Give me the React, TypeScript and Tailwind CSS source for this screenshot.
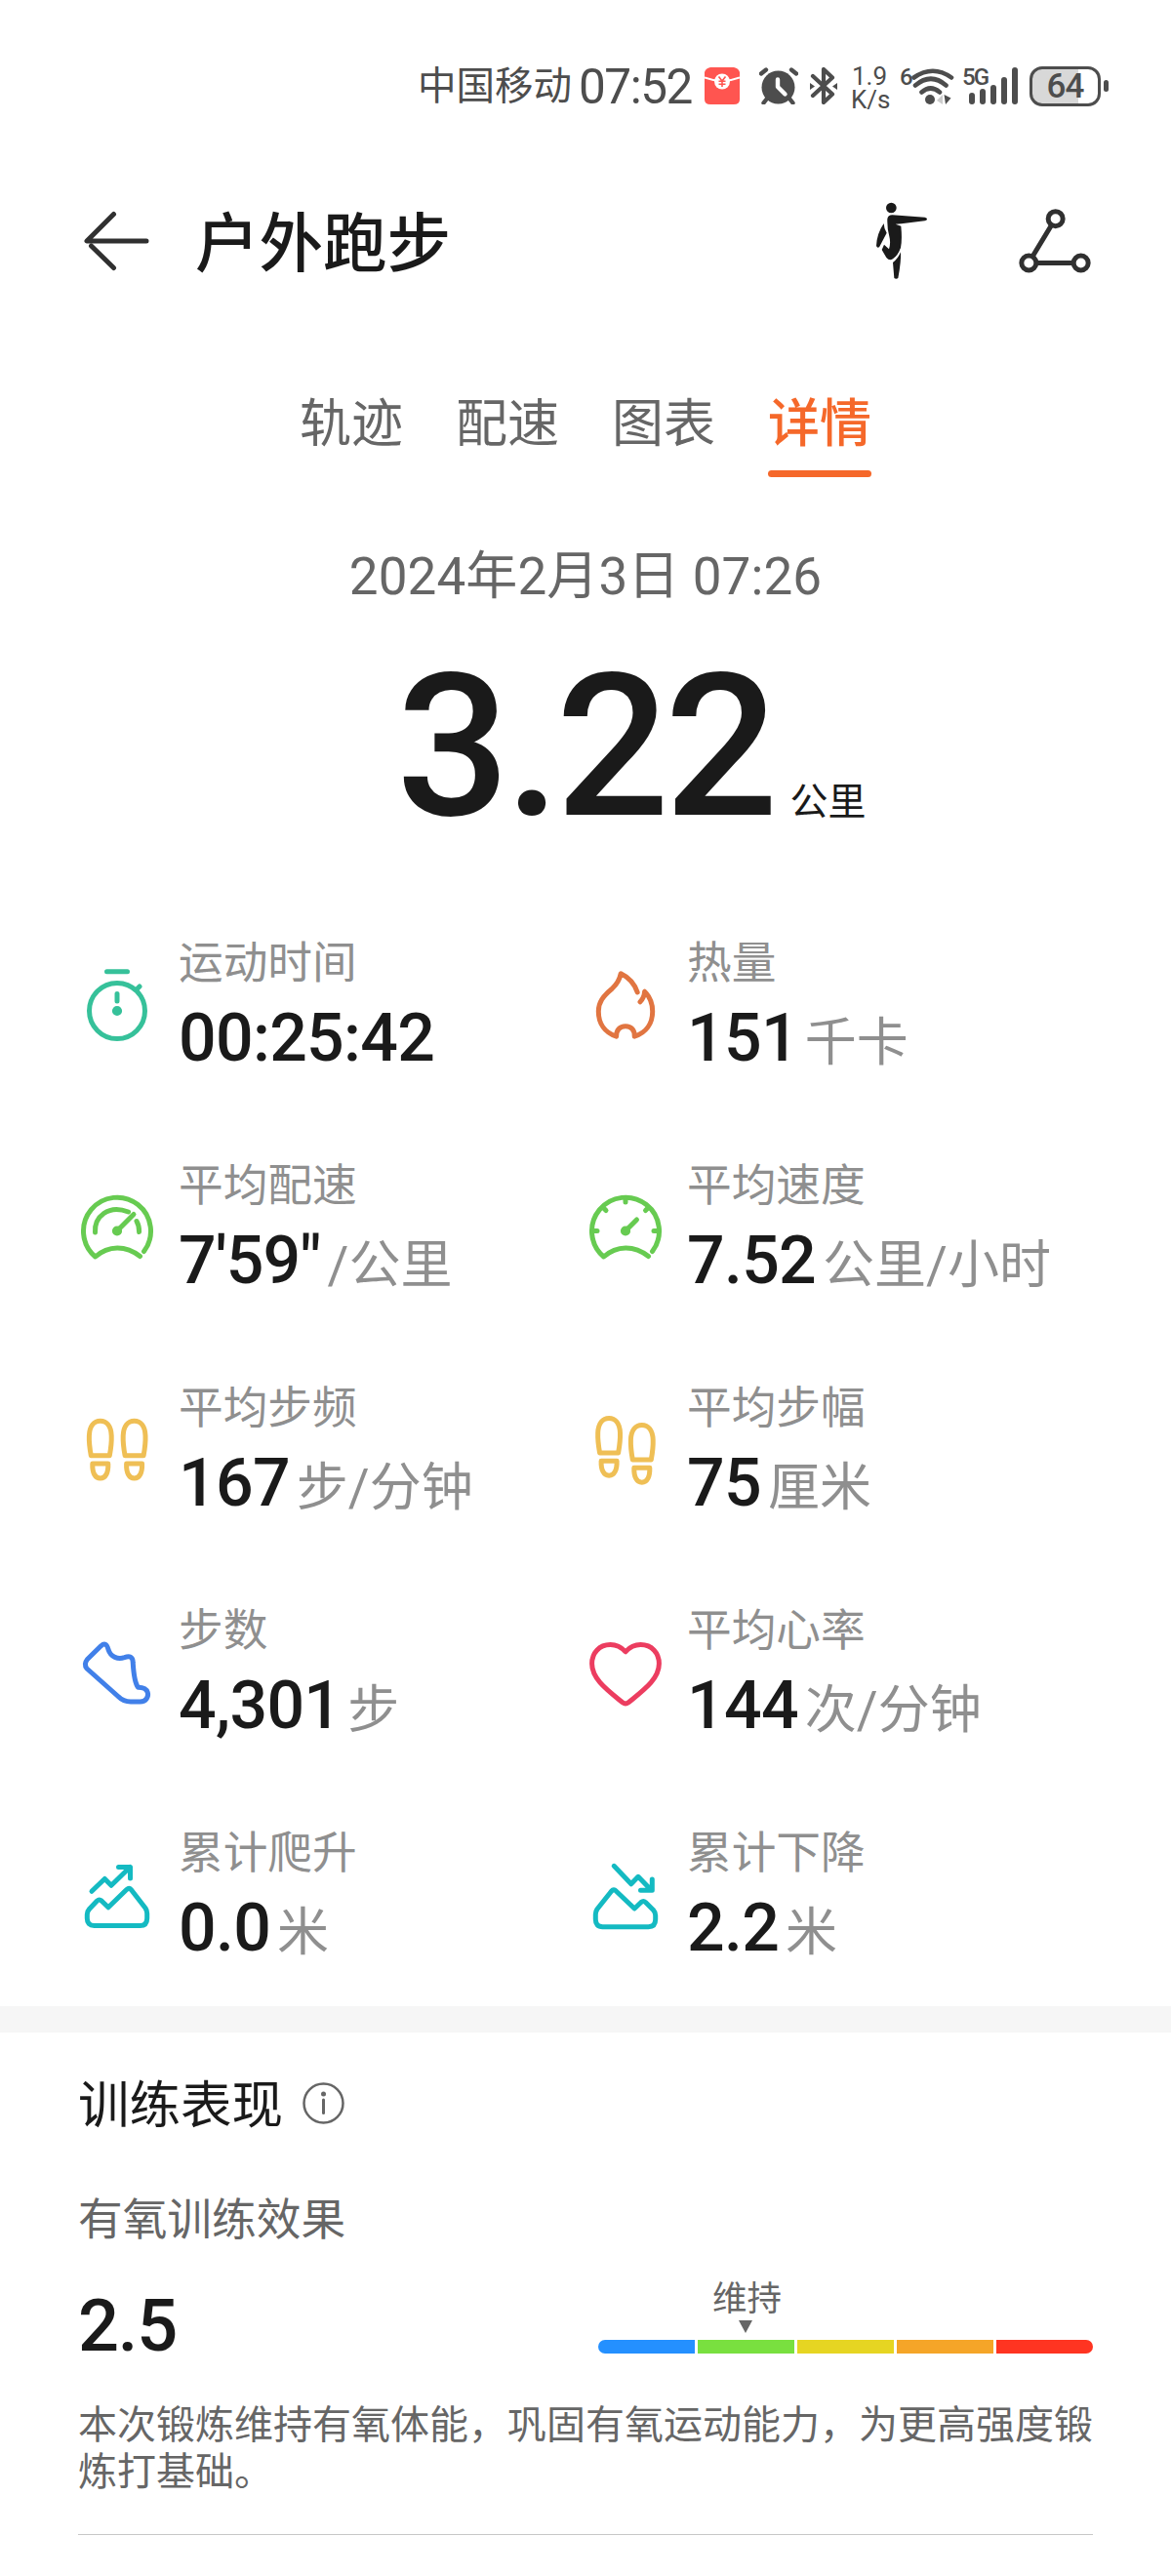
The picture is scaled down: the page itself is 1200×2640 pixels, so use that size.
import type { ReactNode } from "react";

type Stat = {
  label: string;
  value: string;
  unit?: string;
  color: string;
  icon: ReactNode;
};

const TABS = ["轨迹", "配速", "图表", "详情"];

const SEGMENTS = [
  "bg-[#2490ff] rounded-l-full",
  "bg-[#79e03f]",
  "bg-[#e6d522]",
  "bg-[#f5a528]",
  "bg-[#ff3421] rounded-r-full",
];

function Footprint({ x, y }: { x: number; y: number }) {
  return (
    <g transform={`translate(${x} ${y})`}>
      <path d="M-9.5 35.5 C-10.5 30 -11.7 22 -11.4 15 C-11 5 -6.5 0 0 0 C6.5 0 11 5 11.4 15 C11.7 22 10.5 30 9.5 35.5 Z" />
      <path d="M-8 43.8 H8 C8.3 53 5.5 58.7 0 58.7 C-5.5 58.7 -8.3 53 -8 43.8 Z" />
    </g>
  );
}

const GAUGE = "M67.5 64.5 A34.5 34.5 0 1 0 17.7 70 C31 58 49 58 63.5 69.5";

const STATS: Stat[] = [
  {
    label: "运动时间",
    value: "00:25:42",
    color: "text-[#36c19a]",
    icon: (
      <>
        <circle cx="40" cy="46" r="28.5" />
        <path d="M29.5 5.7 H50.5 M60.5 23.5 L63 21 M40 28.5 V36" />
        <circle cx="40" cy="46" r="2.6" />
      </>
    ),
  },
  {
    label: "热量",
    value: "151",
    unit: "千卡",
    color: "text-[#e17541]",
    icon: (
      <path d="M52.2 27 C49.5 19 43 11.5 35.2 7.8 C34 14 31.5 18.5 26 23.5 C17 31 12.3 37 12.3 46.5 C12.3 59 19 68.5 30.6 72.2 C30.6 65.5 34 61.8 40 61.8 C46 61.8 49.4 65.5 49.2 72.2 C61 68.5 67.7 59 67.7 46.5 C67.7 38.5 65 31.5 59.6 26.2 C59.3 30.5 57.8 34 55 36.8" />
    ),
  },
  {
    label: "平均配速",
    value: "7'59\"",
    unit: "/公里",
    color: "text-[#67cb51]",
    icon: (
      <>
        <path d={GAUGE} />
        <path d="M17.5 45 C16.5 29 31 16 51.5 24 M60 33.5 C62 37 62.7 40.5 62.6 44.5" />
        <path d="M40 43.5 L57 26.5" />
        <circle cx="40" cy="43.5" r="2.6" />
      </>
    ),
  },
  {
    label: "平均速度",
    value: "7.52",
    unit: "公里/小时",
    color: "text-[#67cb51]",
    icon: (
      <>
        <path d={GAUGE} />
        <path d="M40 10 V14 M6 43.5 H11 M74 43.5 H69 M17 19.5 L20 22.5 M63.5 19.5 L60.5 22.5 M40 43.5 L51.5 32" />
        <circle cx="40" cy="43.5" r="2.6" />
      </>
    ),
  },
  {
    label: "平均步频",
    value: "167",
    unit: "步/分钟",
    color: "text-[#efbf55]",
    icon: (
      <>
        <Footprint x={22.8} y={10.3} />
        <Footprint x={57.6} y={10.3} />
      </>
    ),
  },
  {
    label: "平均步幅",
    value: "75",
    unit: "厘米",
    color: "text-[#efbf55]",
    icon: (
      <>
        <Footprint x={23.1} y={7.5} />
        <Footprint x={56.8} y={14.5} />
      </>
    ),
  },
  {
    label: "步数",
    value: "4,301",
    unit: "步",
    color: "text-[#4180e9]",
    icon: (
      <path d="M23.5 12.8 L9.5 26.5 Q5.5 31.5 9 36 L41 64.5 Q46.5 70 54 70 H63.5 C70 70 72.5 64.5 71.3 60.5 C70 56.5 67 55.3 61.5 55.3 C57.5 50 56.7 38 56.2 29.5 C56 24 53 22.8 47.5 24.7 C41 26.7 33.5 24.5 31 16.5 C29.5 10.5 27 9.7 23.5 12.8 Z" />
    ),
  },
  {
    label: "平均心率",
    value: "144",
    unit: "次/分钟",
    color: "text-[#ec3d60]",
    icon: (
      <path d="M40 18.8 C35 13.5 30 11.6 24.5 11.6 C13 11.6 5.6 20 5.6 31 C5.6 47 22 58.5 37 70.8 Q40 73 43 70.8 C58 58.5 74.4 47 74.4 31 C74.4 20 67 11.6 55.5 11.6 C50 11.6 45 13.5 40 18.8 Z" />
    ),
  },
  {
    label: "累计爬升",
    value: "0.0",
    unit: "米",
    color: "text-[#14bac2]",
    icon: (
      <>
        <path d="M14 36.3 L27.3 23.5 L34 30.3 L53.3 11.5 M41.5 11.5 H53.5 V23" />
        <path d="M9.3 60 Q9.3 57 11.5 54.5 L19.5 46 Q21.7 44 24 46 L31 52.8 L50 34.3 Q52.3 32.3 54.5 34.7 L69 53.5 Q70.7 56 70.7 59 V64 Q70.7 71.5 63.5 71.5 H16.5 Q9.3 71.5 9.3 64 Z" />
      </>
    ),
  },
  {
    label: "累计下降",
    value: "2.2",
    unit: "米",
    color: "text-[#14bac2]",
    icon: (
      <>
        <path d="M28.2 10.3 L45.8 28.8 L53 21.3 L66.5 35.2 M67.3 24 V35.3 H55.5" />
        <path d="M9.3 60 Q9.3 57 11 54.5 L25.5 36.2 Q28 33.5 30.3 36 L49.2 54 L56 47.5 Q58.3 45.5 60.5 47.5 L68.5 55.5 Q70.7 58 70.7 61 V65 Q70.7 72.7 63.5 72.7 H16.5 Q9.3 72.7 9.3 65 Z" />
      </>
    ),
  },
];

function StatusBar() {
  return (
    <div className="flex h-[176px] items-center pl-[428px] text-[#4d4d4d]">
      <span className="w-[165px] pt-px text-[39.5px] leading-[46px] whitespace-nowrap">
        中国移动
      </span>
      <span className="w-[129px] pt-[2px] text-[49.5px] leading-[50px] tracking-[-1.5px] whitespace-nowrap">
        07:52
      </span>

      <svg className="h-[38px] w-[36px]" viewBox="0 0 36 38">
        <path
          d="M0 5 Q1 1 6 0 H30 Q35 1 36 5 V33 Q36 38 30 38 H6 Q0 38 0 33 Z"
          fill="#ff5550"
        />
        <path d="M0 10.5 Q9 14 18 14 Q27 14 36 10.5" stroke="#fff" strokeWidth="2" fill="none" />
        <circle cx="18" cy="14.5" r="8" fill="#fff" />
        <path
          d="M14.5 9.5 L18 14 L21.5 9.5 M18 14 V20 M14.5 14.3 H21.5 M14.5 17.2 H21.5"
          stroke="#ff5550"
          strokeWidth="1.6"
          fill="none"
        />
      </svg>

      <svg className="ml-[20px] h-[38px] w-[40px]" viewBox="0 0 40 38">
        <circle cx="19.5" cy="20.5" r="17" fill="currentColor" />
        <path
          d="M2 6.5 L7 2.5 M38 6.5 L33 2.5 M8 32 L4.5 36.5 M31 32 L34.5 36.5"
          stroke="currentColor"
          strokeWidth="4.4"
          strokeLinecap="round"
        />
        <path
          d="M19 12.5 V20 L26.5 27.5"
          stroke="#fff"
          strokeWidth="4.4"
          strokeLinecap="round"
          strokeLinejoin="round"
          fill="none"
        />
      </svg>

      <svg className="ml-[12px] h-[38px] w-[28px]" viewBox="0 0 28 38">
        <path
          d="M3 9 L23 27.5 L14 36 V2 L23 10.5 L3 29"
          stroke="currentColor"
          strokeWidth="4.2"
          strokeLinecap="round"
          strokeLinejoin="round"
          fill="none"
        />
        <path d="M0 16 L5 19.5 L0 23 Z M28 16 L23 19.5 L28 23 Z" fill="currentColor" />
      </svg>

      <p className="ml-[14px] w-[38px] pt-[3px] text-center text-[26px] leading-[24px] whitespace-pre-line">
        {"1.9\nK/s"}
      </p>

      <div className="ml-[12px] flex w-[55px] items-start">
        <span className="-mr-[2px] w-[14px] pt-px text-[24px] leading-[18px] font-medium">
          6
        </span>
        <svg className="h-[38px] w-[44px] shrink-0" viewBox="0 0 44 38">
          <path
            d="M2.5 9.5 Q22 -4 41 9.5 M4 17.5 Q20 4 35.5 17.5 M10.5 24.5 Q19.5 16.5 29 24.5"
            transform="translate(0 1)"
            stroke="currentColor"
            strokeWidth="4.6"
            strokeLinecap="round"
            fill="none"
          />
          <circle cx="19" cy="33" r="5" fill="currentColor" />
          <path d="M26 34 L32 28 V38 Z" fill="#ccc" />
          <path d="M33.5 28 L40.5 31.5 L35 38 Z" fill="currentColor" />
        </svg>
      </div>

      <div className="relative ml-[9px] flex h-[38px] w-[58px] items-end justify-end gap-[5px] pr-[1px]">
        <span className="absolute top-[1px] left-0 text-[24px] leading-[18px] font-medium tracking-[-2px]">
          5G
        </span>
        <span className="h-[12px] w-[6px] rounded-full bg-[#4d4d4d]" />
        <span className="h-[16px] w-[6px] rounded-full bg-[#4d4d4d]" />
        <span className="h-[20px] w-[6px] rounded-full bg-[#4d4d4d]" />
        <span className="h-[28px] w-[6px] rounded-full bg-[#4d4d4d]" />
        <span className="h-[38px] w-[6px] rounded-full bg-[#4d4d4d]" />
      </div>

      <div className="ml-[11px] flex items-center gap-[3px]">
        <div className="flex h-[41px] w-[73px] items-center justify-center rounded-[13px] border-[3px] border-[#4d4d4d] bg-linear-to-r from-[#d8d8d8] from-70% to-white to-70% pt-px text-[35px] leading-none font-medium tracking-[-1px]">
          64
        </div>
        <span className="h-[12px] w-[5px] rounded-full bg-[#4d4d4d]" />
      </div>
    </div>
  );
}

function Header() {
  return (
    <div className="flex h-[142px] items-center pr-[82px] pl-[86px]">
      <svg
        className="h-[62px] w-[68px]"
        viewBox="0 0 68 62"
        fill="none"
        stroke="#303030"
        strokeWidth="5"
        strokeLinecap="round"
      >
        <path d="M30.5 3.5 L3 31 H64" strokeLinejoin="round" />
        <path d="M30.5 58.5 L7.5 36" />
      </svg>

      <h1 className="ml-[46px] pt-[7px] text-[65.5px] leading-[72px] font-medium text-[#1a1a1a]">
        户外跑步
      </h1>

      <svg className="ml-auto h-[80px] w-[54px]" viewBox="110 84 162 240" fill="#1a1a1a">
        <circle cx="159" cy="102" r="16" />
        <path d="M147 136 Q149 124 162 124 L262 131 Q270 133 269 137 Q268 141 262 142 L190 151 L172 152 L189 158 Q193 200 188 224 Q180 248 164 259 Q153 266 144 255 L130 231 L137 215 L152 229 Q158 210 153 190 Q146 165 147 136 Z" />
        <path d="M136 150 Q137 168 145 179 L123 221 Q117 228 113 219 Q115 180 136 150 Z" />
        <path d="M188 238 Q190 265 180 318 Q174 323 168 318 L164 270 Q180 258 188 238 Z" />
      </svg>

      <svg
        className="ml-[93px] h-[67px] w-[74px]"
        viewBox="549 101 222 200"
        fill="none"
        stroke="#303030"
        strokeWidth="15"
      >
        <circle cx="662" cy="131" r="22.5" />
        <circle cx="580" cy="267" r="22.5" />
        <circle cx="740" cy="267" r="22.5" />
        <path d="M650 150 L592 246 M603 267 H717" />
      </svg>
    </div>
  );
}

function StatItem({ stat }: { stat: Stat }) {
  return (
    <div className="flex h-[228px] items-center">
      <svg
        className={`h-[80px] w-[80px] shrink-0 ${stat.color}`}
        viewBox="0 0 80 80"
        fill="none"
        stroke="currentColor"
        strokeWidth="5"
        strokeLinecap="round"
        strokeLinejoin="round"
      >
        {stat.icon}
      </svg>
      <div className="ml-[23px] flex flex-col gap-2 whitespace-nowrap">
        <span className="text-[45.7px] leading-[60px] text-[#8f8f8f]">
          {stat.label}
        </span>
        <div className="flex items-baseline gap-[7px]">
          <span className="text-[68px] leading-[76px] font-medium tracking-[-0.7px] text-[#1a1a1a]">
            {stat.value}
          </span>
          {stat.unit && (
            <span className="text-[53px] leading-none text-[#8f8f8f]">
              {stat.unit}
            </span>
          )}
        </div>
      </div>
    </div>
  );
}

function Training() {
  return (
    <section className="px-[80px]">
      <div className="flex items-start pt-[45px]">
        <h2 className="text-[52.5px] leading-[60px] text-[#1a1a1a]">
          训练表现
        </h2>
        <svg className="mt-[6px] ml-[20px] h-[43px] w-[43px]" viewBox="0 0 43 43">
          <circle cx="21.5" cy="21.5" r="20" fill="none" stroke="#666" strokeWidth="2.5" />
          <circle cx="21.5" cy="12" r="2.5" fill="#666" />
          <path d="M21.5 18 V31.5" stroke="#666" strokeWidth="3" strokeLinecap="round" />
        </svg>
      </div>

      <p className="mt-[58px] text-[45.7px] leading-[60px] text-[#666]">
        有氧训练效果
      </p>

      <div className="mt-[29px] flex items-start justify-between">
        <span className="pt-[9px] text-[74px] leading-[80px] font-medium tracking-[-1.2px] text-[#1a1a1a]">
          2.5
        </span>

        <div className="w-[507px]">
          <p className="ml-[117px] pt-px text-[35.5px] leading-[40px] text-[#666]">
            维持
          </p>
          <svg className="mt-[2px] ml-[144px] h-[13px] w-[14px]" viewBox="0 0 14 13">
            <path d="M0 0 H14 L7 13 Z" fill="#666" />
          </svg>
          <div className="mt-[7px] flex gap-[3px]">
            {SEGMENTS.map((segment) => (
              <div key={segment} className={`h-[14px] flex-1 ${segment}`} />
            ))}
          </div>
        </div>
      </div>

      <p className="mt-[38px] text-[40px] leading-[47.5px] text-[#666]">
        本次锻炼维持有氧体能，巩固有氧运动能力，为更高强度锻炼打基础。
      </p>

      <div className="mt-[40px] h-px bg-[#c8c8c8]" />
    </section>
  );
}

export default function App() {
  return (
    <div className="h-[2640px] w-[1200px] overflow-hidden bg-white font-['Roboto','Noto_Sans_CJK_SC',sans-serif]">
      <StatusBar />
      <Header />

      <div className="mt-[87px] flex justify-center gap-[54px]">
        {TABS.map((tab) => {
          const active = tab === "详情";
          return (
            <div key={tab}>
              <div
                className={`text-[53px] leading-[60px] ${active ? "font-medium text-[#f5682a]" : "text-[#666]"}`}
              >
                {tab}
              </div>
              <div
                className={`mt-[17px] h-[7px] rounded-full ${active ? "bg-[#f5682a]" : ""}`}
              />
            </div>
          );
        })}
      </div>

      <p className="mt-[72px] text-center text-[53px] leading-[60px] tracking-[0.1px] text-[#666]">
        2024年2月3日 07:26
      </p>

      <div className="mt-[44px] flex items-baseline pl-[406px] text-[#1a1a1a]">
        <span className="text-[205px] leading-[200px] font-medium tracking-[-5px]">
          3.22
        </span>
        <span className="ml-[17px] text-[39px] leading-none">公里</span>
      </div>

      <div className="mt-[51px] grid grid-cols-[521px_521px] pl-[80px]">
        {STATS.map((stat) => (
          <StatItem key={stat.label} stat={stat} />
        ))}
      </div>

      <div className="h-[27px] bg-[#f6f6f6]" />

      <Training />
    </div>
  );
}
